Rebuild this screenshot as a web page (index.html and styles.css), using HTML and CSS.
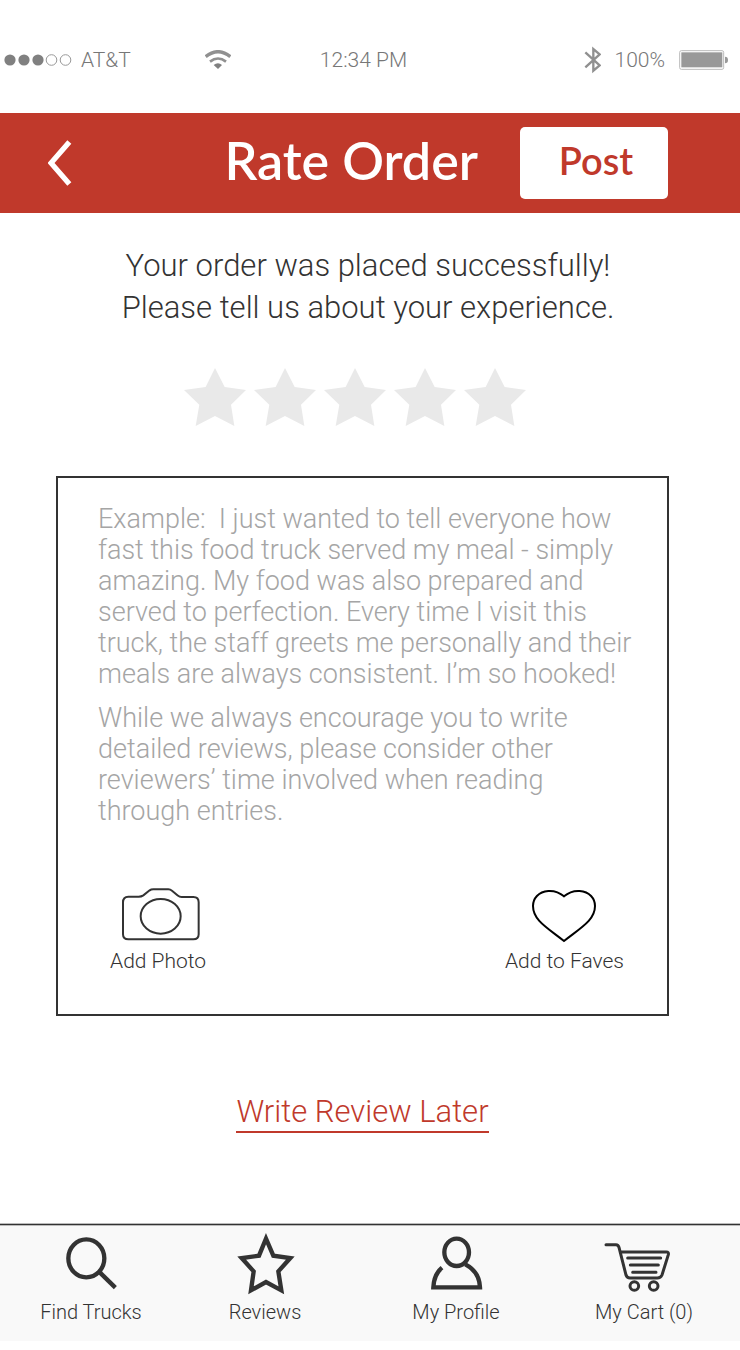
FILE: index.html
```html
<!DOCTYPE html>
<html lang="en">
<head>
<meta charset="utf-8">
<meta name="viewport" content="width=device-width, initial-scale=1">
<title>Rate Order</title>
<link rel="stylesheet" href="styles.css">
</head>
<body>
<svg class="symbols" aria-hidden="true">
  <symbol id="star" viewBox="0 0 186 174">
    <path d="M93 0 122 57 186 66 141 110 151 174 93 144 35 174 46 110 0 66 65 57Z"/>
  </symbol>
</svg>

<div class="status">
  <svg class="signal" viewBox="0 0 68 12" aria-hidden="true">
    <g fill="#808080"><circle cx="6" cy="6" r="5.6"/><circle cx="20" cy="6" r="5.6"/><circle cx="34" cy="6" r="5.6"/></g>
    <g fill="none" stroke="#999"><circle cx="47.5" cy="6" r="5.3"/><circle cx="61.5" cy="6" r="5.3"/></g>
  </svg>
  <span>AT&amp;T</span>
  <svg class="wifi" viewBox="615 56 78 57" fill="none" stroke="#909090" aria-hidden="true">
    <path stroke-width="10" d="M617 76Q654 46 691 76"/>
    <path stroke-width="8" d="M630 91Q654 72 678 91"/>
    <path fill="#808080" stroke="none" d="M641 101Q654 91 666 101L654 113Z"/>
  </svg>
  <span class="time">12:34 PM</span>
  <div class="power">
    <svg class="bluetooth" viewBox="639 45 51 84" fill="none" stroke="#909090" stroke-width="7" aria-hidden="true">
      <path d="M643 64 686 103 667 119V54L686 70 643 109"/>
    </svg>
    <span>100%</span>
    <svg class="battery" viewBox="927 57 147 60" aria-hidden="true">
      <rect x="929" y="59" width="132" height="56" rx="5" fill="none" stroke="#bbb" stroke-width="3"/>
      <rect x="934" y="64" width="123" height="45" fill="#999"/>
      <path fill="#999" d="M1065 77Q1074 77 1074 87T1065 97Z"/>
    </svg>
  </div>
</div>

<header class="header">
  <button class="back" type="button" aria-label="Back">
    <svg viewBox="144 104 72 138" fill="none" stroke="#fff" stroke-width="16" aria-hidden="true"><path d="M208 110 153 173 208 236"/></svg>
  </button>
  <h1 class="title">Rate Order</h1>
  <button class="post" type="submit" form="review">Post</button>
</header>

<main class="main">
  <p class="intro">Your order was placed successfully!<br>Please tell us about your experience.</p>

  <form id="review">
    <fieldset class="rating">
      <legend class="hidden">Rating</legend>
      <label class="rate"><input class="hidden" type="radio" name="rating" value="1" aria-label="1 star"><svg><use href="#star"/></svg></label>
      <label class="rate"><input class="hidden" type="radio" name="rating" value="2" aria-label="2 stars"><svg><use href="#star"/></svg></label>
      <label class="rate"><input class="hidden" type="radio" name="rating" value="3" aria-label="3 stars"><svg><use href="#star"/></svg></label>
      <label class="rate"><input class="hidden" type="radio" name="rating" value="4" aria-label="4 stars"><svg><use href="#star"/></svg></label>
      <label class="rate"><input class="hidden" type="radio" name="rating" value="5" aria-label="5 stars"><svg><use href="#star"/></svg></label>
    </fieldset>

    <div class="card">
      <div class="editor">
        <textarea class="entry" name="review" placeholder=" " aria-label="Your review" aria-describedby="hint"></textarea>
        <div class="hint" id="hint">
          <p>Example:&nbsp; I just wanted to tell everyone how<br>fast this food truck served my meal - simply<br>amazing. My food was also prepared and<br>served to perfection. Every time I visit this<br>truck, the staff greets me personally and their<br>meals are always consistent. I’m so hooked!</p>
          <p>While we always encourage you to write<br>detailed reviews, please consider other<br>reviewers’ time involved when reading<br>through entries.</p>
        </div>
      </div>
      <div class="actions">
        <button class="action" type="button">
          <svg viewBox="72 51 264 168" fill="none" stroke="#333" stroke-width="6" aria-hidden="true">
            <path d="M115 80H146Q154 80 160 76L179 61Q183 58 190 58H235Q241 58 246 62L264 77Q268 81 275 81H310Q326 81 326 97V193Q326 208 310 208H115Q99 208 99 193V97Q99 80 115 80Z"/>
            <ellipse cx="212" cy="139" rx="60" ry="52"/>
          </svg>
          Add Photo
        </button>
        <button class="action" type="button">
          <svg viewBox="90 51 264 168" fill="none" stroke="#000" stroke-width="6" aria-hidden="true">
            <path d="M222 79C207 66 191 62 175 63C145 65 129 86 129 108C129 150 170 172 222 213C274 172 315 150 315 108C315 86 299 65 269 63C253 62 237 66 222 79Z"/>
          </svg>
          Add to Faves
        </button>
      </div>
    </div>
  </form>

  <a class="later" href="#later">Write Review Later</a>
</main>

<nav class="tabs">
  <a class="tab" href="#trucks">
    <svg viewBox="153 51 240 192" aria-hidden="true"><ellipse cx="259" cy="130" rx="54" ry="57"/><path d="M300 173 346 218"/></svg>
    Find Trucks
  </a>
  <a class="tab" href="#reviews">
    <svg viewBox="678 51 240 192" aria-hidden="true"><path d="M801 71 823 122 874 129 838 169 847 226 801 201 756 226 764 169 728 129 780 122Z"/></svg>
    Reviews
  </a>
  <a class="tab" href="#profile">
    <svg viewBox="138 51 240 192" aria-hidden="true"><ellipse cx="260" cy="112" rx="37" ry="41"/><path d="M216 158Q192 178 190 217H330Q328 170 286 148"/></svg>
    My Profile
  </a>
  <a class="tab" href="#cart">
    <svg class="cart" viewBox="702 51 240 192" aria-hidden="true"><path d="M708 89H738Q745 89 747 97L768 180Q771 189 780 189H862Q872 189 876 180L895 119Q897 111 889 111H752M773 129H872M781 150H865M788 172H858"/><circle cx="793" cy="213" r="13"/><circle cx="851" cy="213" r="13"/></svg>
    My Cart (0)
  </a>
</nav>
</body>
</html>
```
FILE: styles.css
```css
* { box-sizing: border-box; }

body {
  display: flex;
  flex-direction: column;
  min-height: 100vh;
  margin: 0;
  background: #fff;
  color: #333;
  font-family: Roboto, sans-serif;
  font-weight: 300;
}

svg { display: block; flex: none; }
h1, p, fieldset { margin: 0; padding: 0; border: 0; }
button {
  margin: 0;
  padding: 0;
  border: 0;
  background: none;
  color: inherit;
  font: inherit;
  cursor: pointer;
}

.symbols { display: none; }
.hidden {
  position: absolute;
  width: 1px;
  height: 1px;
  margin: 0;
  padding: 0;
  overflow: hidden;
  clip-path: inset(50%);
  opacity: 0;
}

.status {
  display: flex;
  align-items: center;
  height: 113px;
  padding: 6px 12px 0 4px;
  color: #777;
  font-size: 21px;
  line-height: 28px;
}
.signal { width: 68px; height: 12px; margin-right: 9px; }
.wifi { width: 26px; height: 19px; margin-left: 74px; }
.time { margin-left: 89px; }
.power {
  display: flex;
  align-items: center;
  gap: 14px;
  margin-left: auto;
}
.bluetooth { width: 17px; height: 28px; }
.battery { width: 49px; height: 20px; }

.header {
  display: flex;
  align-items: center;
  height: 100px;
  padding: 0 72px 0 48px;
  background: #c0392b;
  color: #fff;
  font-family: Lato, sans-serif;
  font-weight: 600;
}
.back svg { width: 24px; height: 46px; }
.title {
  margin: 0 42px 0 auto;
  padding-bottom: 6px;
  font-size: 52px;
  font-weight: 600;
  line-height: 60px;
}
.post {
  width: 148px;
  height: 72px;
  padding: 0 0 6px 4px;
  border-radius: 5px;
  background: #fff;
  color: #c0392b;
  font-size: 38px;
}

.main {
  display: flex;
  flex-direction: column;
  padding-top: 32px;
}
.intro {
  padding-right: 4px;
  font-size: 31px;
  line-height: 42px;
  text-align: center;
}

.rating {
  display: flex;
  justify-content: center;
  gap: 8px;
  margin: 39px 30px 50px 0;
}
.rate svg { width: 62px; height: 58px; fill: #e9e9e9; cursor: pointer; }
.rate:has(:checked) svg,
.rate:has(~ .rate :checked) svg { fill: #c0392b; }

.card {
  margin: 0 71px 0 56px;
  padding: 26px 0 39px 40px;
  border: 2px solid #333;
}
.editor {
  display: grid;
  font-size: 27px;
  line-height: 31px;
}
.entry, .hint { grid-area: 1 / 1; }
.entry {
  padding: 0;
  border: 0;
  outline: 0;
  background: none;
  color: #333;
  font: inherit;
  resize: none;
}
.hint {
  display: grid;
  gap: 13px;
  color: #a5a5a5;
  pointer-events: none;
}
.entry:not(:placeholder-shown) + .hint { visibility: hidden; }

.actions {
  display: flex;
  justify-content: space-between;
  margin-top: 60px;
  padding: 0 43px 0 12px;
}
.action {
  display: flex;
  flex-direction: column;
  align-items: center;
  gap: 5px;
  font-size: 21px;
  line-height: 27px;
}
.action svg { width: 88px; height: 56px; }

.later {
  align-self: center;
  margin: 78px 15px 0 0;
  padding-bottom: 1px;
  border-bottom: 2px solid #c0392b;
  color: #c0392b;
  font-size: 31px;
  line-height: 36px;
  text-decoration: none;
}

.tabs {
  display: grid;
  grid-template-columns: 182fr 166fr 216fr 160fr;
  margin: auto 0 9px;
  padding: 7px 16px 15px 0;
  border-top: 1px solid #333;
  background: #f9f9f9;
  box-shadow: 0 -1px #bbb, inset 0 1px #bbb;
}
.tab {
  display: flex;
  flex-direction: column;
  align-items: center;
  gap: 3px;
  color: #333;
  font-size: 20px;
  line-height: 27px;
  text-decoration: none;
}
.tab svg {
  width: 80px;
  height: 64px;
  fill: none;
  stroke: #333;
  stroke-width: 13;
}
.tab .cart { stroke-width: 9; stroke-linecap: round; }
```
